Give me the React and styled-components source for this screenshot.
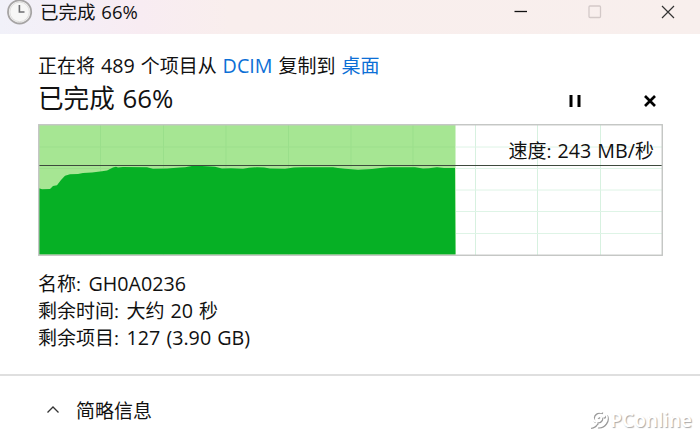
import styled, { createGlobalStyle } from "styled-components";

const GlobalStyle = createGlobalStyle`
  body {
    margin: 0;
    background: #fff;
  }
`

const Window = styled.div`
  position: relative;
  display: flex;
  flex-direction: column;
  width: 700px;
  height: 437px;
  overflow: hidden;
  background: #fff;
  color: #111;
  font-family: "Open Sans", "Noto Sans CJK SC", sans-serif;
  font-size: 19px;
  word-spacing: 1px;
  white-space: nowrap;
`

const TitleBar = styled.header`
  display: flex;
  align-items: center;
  box-sizing: border-box;
  height: 34px;
  padding: 0 18px 10px 6px;
  background: linear-gradient(90deg, #f1f1f9 0, #f5eef6 80px, #f8ecf2 140px, #f9eeed 230px, #f8efed 100%);
`

const Title = styled.span`
  flex: 1;
  margin-left: 7px;
  font-size: 18.5px;
  line-height: 24px;
`

const WindowButtons = styled.div`
  display: flex;
  gap: 45.5px;
`

const IconButton = styled.button`
  display: flex;
  align-items: center;
  justify-content: center;
  width: 28px;
  height: 24px;
  padding: 0;
  border: 0;
  background: none;
`

const Body = styled.main`
  display: flex;
  flex-direction: column;
  height: 340px;
  box-sizing: border-box;
  padding: 18px 37px 0 38px;
`

const Line = styled.div`
  height: 27px;
  line-height: 27px;
`

const Latin = styled.span`
  font-size: ${(p) => p.$size || 19.7}px;
`

const Detail = styled(Line)`
  display: flex;
  gap: 7.5px;
  line-height: 26px;
`

const Link = styled.span`
  color: #0c6fd6;
`

const StatusRow = styled.div`
  display: flex;
  align-items: flex-start;
  height: 45px;
`

const Status = styled.div`
  flex: 1;
  font-size: 25.6px;
  line-height: 38px;
`

const Actions = styled.div`
  display: flex;
  gap: 47px;
  margin-right: -1px;
  padding-top: 10px;
`

const ChartBox = styled.div`
  position: relative;
  height: 132px;
  margin-bottom: 15px;

  svg {
    display: block;
  }
`

const Speed = styled.div`
  position: absolute;
  top: 13px;
  right: 9px;
  line-height: 27px;
`

const Footer = styled.footer`
  display: flex;
  align-items: center;
  height: 61px;
  padding: 8px 0 0 46px;
  box-sizing: border-box;
  border-top: 2px solid #dfdfdf;
`

const FooterLabel = styled.span`
  margin-left: 16px;
`

const Watermark = styled.div`
  position: absolute;
  right: 8px;
  bottom: 4px;
  display: flex;
  align-items: center;
  gap: 1px;
  color: #fff;
  font: 600 19px/26px "Noto Sans", sans-serif;
  text-shadow: 1px 1px 1px #aaa;

  svg {
    filter: drop-shadow(1px 1px 0.6px #999);
  }
`

const columns = [62.5, 125.5, 188, 250.5, 313, 375, 437.5, 499.5, 562.5]
const rows = [23, 44.5, 66, 87.5, 109.5]

const speeds = [
  [1, 64.3], [4, 65.2], [12, 65], [15, 62], [19, 61.3], [23, 56], [27, 51.7],
  [32, 50.2], [40, 50], [45, 49], [54, 48.5], [64, 47.3], [69, 46.5],
  [75, 43.5], [78, 42.8], [80, 43.5], [85, 42.9], [109, 43.3], [115, 44.7],
  [129, 44.6], [142, 43.5], [147, 43.3], [154, 42], [164, 42], [177, 42.8],
  [184, 44.4], [193, 44.3], [205, 44.7], [211, 43.8], [219, 43.3], [226, 43.4],
  [232, 44.4], [247, 44.7], [256, 43.6], [265, 43.3], [295, 43.3], [300, 44],
  [307, 44.7], [320, 45.7], [334, 45], [342, 44], [352, 43.3], [377, 43.3],
  [385, 44.6], [391, 44.2], [399, 43.3], [406, 44], [417, 44],
]

function SpeedChart() {
  const area = `M1 130.5 L${speeds.map((p) => p.join(" ")).join(" L")} L417.5 130.5 Z`
  return (
    <svg width="625" height="132" viewBox="0 0 625 132">
      <rect x="1" y="1" width="416.5" height="130" fill="#a6e693" />
      {columns.map((x) => (
        <path
          key={x}
          d={`M${x} 1V131`}
          stroke={x < 417 ? "#9adf8b" : "#d7f1e0"}
        />
      ))}
      {rows.map((y) => (
        <g key={y}>
          <path d={`M1 ${y}H417`} stroke="#9cdf8c" />
          <path d={`M418 ${y}H624`} stroke="#def4e6" />
        </g>
      ))}
      <path d={area} fill="#06b025" />
      <path d="M1 41.5H624" stroke="#3d4a3d" strokeWidth="1.1" />
      <rect x="0.75" y="0.75" width="623.5" height="130.5" fill="none" stroke="#c3c5c3" strokeWidth="1.4" />
    </svg>
  )
}

function ClockIcon() {
  return (
    <svg width="27" height="27" viewBox="0 0 27 27">
      <circle cx="13.6" cy="12.9" r="11.6" fill="#f7f7f6" stroke="#a6a4a4" strokeWidth="1.8" />
      <circle cx="13.6" cy="12.9" r="9.8" fill="none" stroke="#dedddc" />
      <path d="M13.4 6V13H18.5" fill="none" stroke="#6d6e70" strokeWidth="1.6" />
    </svg>
  )
}

export default function App() {
  return (
    <Window>
      <GlobalStyle />
      <TitleBar>
        <ClockIcon />
        <Title>已完成 <Latin $size={18.5}>66%</Latin></Title>
        <WindowButtons>
          <IconButton aria-label="最小化">
            <svg width="14" height="14" viewBox="0 0 14 14">
              <path d="M.5 6.5H13" stroke="#111" strokeWidth="1.3" />
            </svg>
          </IconButton>
          <IconButton disabled aria-label="最大化">
            <svg width="14" height="14" viewBox="0 0 14 14">
              <rect x="1" y="1" width="11.5" height="11.5" rx="1" fill="none" stroke="#d3c9c8" strokeWidth="1.3" />
            </svg>
          </IconButton>
          <IconButton aria-label="关闭">
            <svg width="14" height="14" viewBox="0 0 14 14">
              <path d="M1 1L13 13M13 1L1 13" stroke="#333" strokeWidth="1.2" />
            </svg>
          </IconButton>
        </WindowButtons>
      </TitleBar>

      <Body>
        <Line>
          正在将 <Latin>489</Latin> 个项目从 <Link><Latin>DCIM</Latin></Link> 复制到 <Link>桌面</Link>
        </Line>
        <StatusRow>
          <Status>已完成 <Latin $size={25.8}>66%</Latin></Status>
          <Actions>
            <IconButton aria-label="暂停">
              <svg width="14" height="14" viewBox="0 0 14 14">
                <path d="M3 1V13M11 1V13" stroke="#000" strokeWidth="3" />
              </svg>
            </IconButton>
            <IconButton aria-label="取消">
              <svg width="14" height="14" viewBox="0 0 14 14">
                <path d="M2 2L12 12M12 2L2 12" stroke="#000" strokeWidth="2.7" />
              </svg>
            </IconButton>
          </Actions>
        </StatusRow>
        <ChartBox>
          <SpeedChart />
          <Speed>速度: <Latin>243 MB/</Latin>秒</Speed>
        </ChartBox>
        <Detail><span>名称:</span><Latin>GH0A0236</Latin></Detail>
        <Detail><span>剩余时间:</span><span>大约 <Latin>20</Latin> 秒</span></Detail>
        <Detail><span>剩余项目:</span><Latin>127 (3.90 GB)</Latin></Detail>
      </Body>

      <Footer>
        <svg width="14" height="14" viewBox="0 0 14 14">
          <path d="M1.5 9.5L7 4L12.5 9.5" fill="none" stroke="#333" strokeWidth="1.3" />
        </svg>
        <FooterLabel>简略信息</FooterLabel>
      </Footer>

      <Watermark>
        <svg width="20" height="20" viewBox="0 0 20 20" fill="none" stroke="#fff" strokeWidth="1.8">
          <path d="M13 2.5C8 .5 3.5 4 4 8.5C4.5 12 10 13 12 9.5C13.5 6.5 9.5 5 8.5 8M17 4.5C20 10 15 17.5 8 16.5M1 17C5 16.5 6.5 15 8 12.5" />
          <circle cx="14.5" cy="6" r=".8" />
        </svg>
        PConline
      </Watermark>
    </Window>
  )
}
